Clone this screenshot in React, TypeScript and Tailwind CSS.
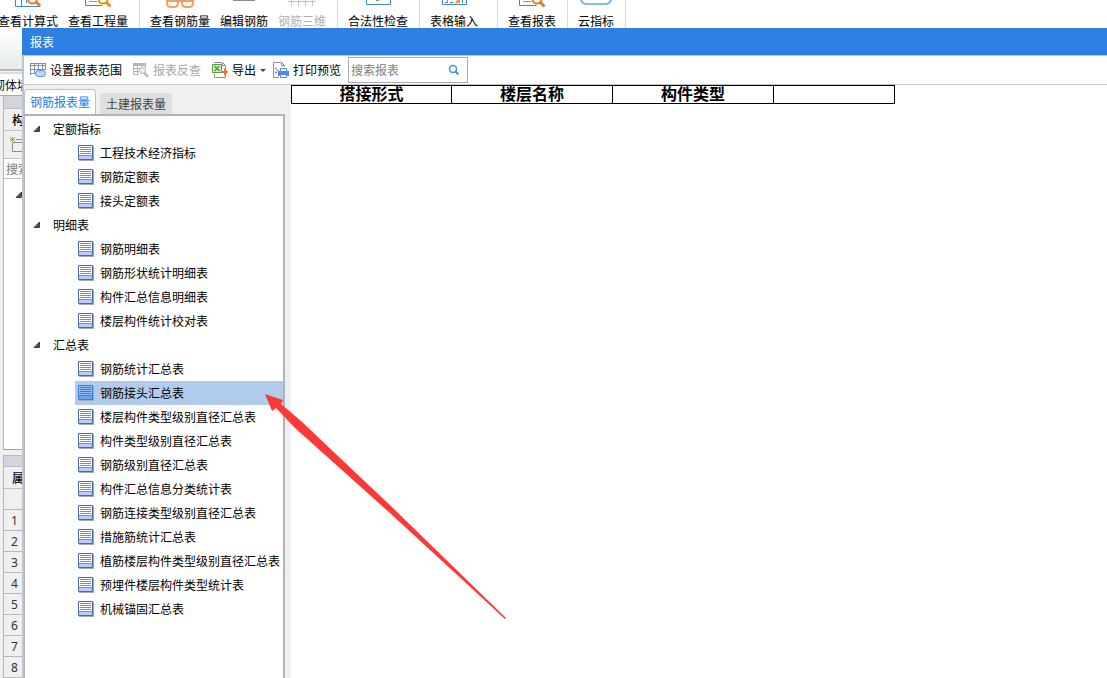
import React, { useState } from 'react';

interface ReportGroup {
  name: string;
  items: string[];
}

const reportGroups: ReportGroup[] = [
  { name: '定额指标', items: ['工程技术经济指标', '钢筋定额表', '接头定额表'] },
  {
    name: '明细表',
    items: ['钢筋明细表', '钢筋形状统计明细表', '构件汇总信息明细表', '楼层构件统计校对表'],
  },
  {
    name: '汇总表',
    items: [
      '钢筋统计汇总表',
      '钢筋接头汇总表',
      '楼层构件类型级别直径汇总表',
      '构件类型级别直径汇总表',
      '钢筋级别直径汇总表',
      '构件汇总信息分类统计表',
      '钢筋连接类型级别直径汇总表',
      '措施筋统计汇总表',
      '植筋楼层构件类型级别直径汇总表',
      '预埋件楼层构件类型统计表',
      '机械锚固汇总表',
    ],
  },
];

// Ribbon icons are scrolled up, only the lower 8px are visible
const CalcSearchIcon = () => (
  <svg className="h-2 w-7" viewBox="0 0 28 8" fill="none">
    <path d="M1.500 0v6.500h25M7.500 0v6M12.500 0v3" stroke="#3f86d2" />
    <circle cx="18.500" cy="-1" r="4.500" stroke="#ee7a25" strokeWidth="2" />
    <path d="M21.500 1.500l4.500 4" stroke="#ee7a25" strokeWidth="3" />
  </svg>
);

const SheetSearchIcon = ({ color }: { color: string }) => (
  <svg className="h-2 w-7" viewBox="0 0 28 8" fill="none">
    <path d="M1.500 0v5.500h17" stroke="#3f86d2" />
    <path d="M5 1.500h8" stroke="#8d969f" />
    <circle cx="19" cy="-1" r="4.500" stroke={color} strokeWidth="2" />
    <path d="M22 2l4.500 4.500" stroke={color} strokeWidth="3" />
  </svg>
);

const GlassesIcon = () => (
  <svg className="h-2 w-7" viewBox="0 0 28 8" fill="none" stroke="#f2a061" strokeWidth="2">
    <path d="M1 0v3q0 4 4 4h3q4 0 4-4V1M1 1h26M16 1v2q0 4 4 4h3q4 0 4-4V0" />
  </svg>
);

const EditIcon = () => (
  <svg className="h-2 w-7" viewBox="0 0 28 8">
    <path d="M3 0h22v1H3z" fill="#858e98" />
  </svg>
);

const RebarIcon = () => (
  <svg className="h-2 w-7" viewBox="0 0 28 8" fill="none" stroke="#c2c2c2">
    <path d="M0 1.500h28M3.500 0v6M10.500 0v6M17.500 0v6M24.500 0v6" />
  </svg>
);

const CheckIcon = () => (
  <svg className="h-2 w-7" viewBox="0 0 28 8" fill="none">
    <path d="M2.500 0v4.500h24V0" stroke="#3f86d2" />
    <path d="M12 0h3v1h-3z" fill="#6ab04a" />
  </svg>
);

const FormIcon = () => (
  <svg className="h-2 w-7" viewBox="0 0 28 8" fill="none">
    <path d="M2.500 0v4.500h24V0M7.500 0v1.500M5 2.500h3M10 2.500h3M22.500 0v3" stroke="#3f86d2" />
    <path d="M15 3l2-3h3v3z" fill="#ee9a35" />
  </svg>
);

const CloudIcon = () => (
  <svg className="h-2 w-8" viewBox="0 0 32 8" fill="none" stroke="#5fa4ee" strokeWidth="1.600">
    <path d="M1 0q1 4 6 4h18q5 0 6-4" />
  </svg>
);

const ReportIcon = ({ active = false }: { active?: boolean }) => (
  <svg className="h-4 w-4 shrink-0" viewBox="0 0 16 16">
    <path d="M1 1h15v15H1z" fill="#a4a8b4" />
    <path d="M.5.5h14v14H.5z" fill={active ? '#8dbdf3' : '#fff'} stroke={active ? '#3b7fd4' : '#4468b4'} />
    <path d="M1 11h13v3H1z" fill={active ? '#6aa6ec' : '#b9ccfa'} />
    <path
      d="M1 10.500h13M2 2.500h11M2 4.500h11M2 6.500h11M2 8.500h11"
      stroke={active ? '#3a80d8' : '#6a8edc'}
    />
  </svg>
);

const RangeIcon = () => (
  <svg className="h-4 w-4 shrink-0" viewBox="0 0 16 16" fill="none">
    <path d="M.5 1v12M4.500 1v11M8.500 1v8M12.500 1v7M15.500 1v7M0 3.500h16M0 7.500h15M0 11.500h5M0 1.500h16" stroke="#8290a0" />
    <rect x="5.500" y="8.500" width="10" height="6" rx="3" fill="#b9dafa" stroke="#4a90dc" />
  </svg>
);

const TraceIcon = () => (
  <svg className="h-4 w-4 shrink-0" viewBox="0 0 16 16" fill="none" stroke="#b5b5b5">
    <path d="M0 1h13v3H0z" fill="#b5b5b5" stroke="none" />
    <path d="M.5 1v11.500h6M4.500 2v10M8.500 2v3M12.500 2v4M0 6.500h7M0 9.500h6" />
    <circle cx="9.500" cy="8.500" r="3" fill="#eee" />
    <path d="M11.500 11l3.500 4" strokeWidth="2.400" />
  </svg>
);

const ExportIcon = () => (
  <svg className="h-4 w-4 shrink-0" viewBox="0 0 16 16" fill="none">
    <path d="M2.500 12v3.500h11V12M2 .5h8.500l3 3v4M10.500.5v3h3" stroke="#8b949c" />
    <path d="M.5 2.500h9v8h-9z" fill="#d8ecd0" stroke="#58a03c" />
    <path d="M2.500 4l5 5M7.500 4l-5 5" stroke="#58a03c" strokeWidth="1.600" />
    <path d="M9 9h3V6L16 10l-4 4v-3H9z" fill="#f27321" />
  </svg>
);

const PrintIcon = () => (
  <svg className="h-4 w-4 shrink-0" viewBox="0 0 16 16" fill="none">
    <path d="M6 15.500H.5V.5h8l3 3V5M8.500.5v3h3" stroke="#8b949c" />
    <path d="M2 6.500h2M3.500 8.500h2M2 10.500h2" stroke="#8b949c" strokeWidth="1.300" />
    <path d="M5 9h11v5H5z" fill="#4a90e0" />
    <path d="M7.500 6.500h6v3h-6z" fill="#fff" stroke="#4a90e0" />
    <path d="M7.500 12.500h6v3h-6z" fill="#fff" stroke="#4a90e0" />
  </svg>
);

const NewFileIcon = () => (
  <svg className="h-4 w-4 shrink-0" viewBox="0 0 16 16" fill="none">
    <path d="M2.500 6v8.500H16M6 2.500h10M2.500 5.500H16" stroke="#7f93a6" />
    <path d="M0 0l5 5M5 0L0 5M2.500 0v5M0 2.500h5" stroke="#f0a030" />
  </svg>
);

const Triangle = () => (
  <svg className="h-2 w-2 shrink-0" viewBox="0 0 8 8">
    <path d="M6.500 1v5.500H1z" fill="#505050" stroke="#222" strokeWidth=".8" />
  </svg>
);

const RibbonButton = ({ label, icon, disabled }: { label: string; icon: React.ReactNode; disabled?: boolean }) => (
  <button
    type="button"
    disabled={disabled}
    className="flex shrink-0 flex-col items-center gap-1.5 px-[5px] leading-[14px] whitespace-nowrap disabled:text-[#b0b0b0]"
  >
    {icon}
    <span>{label}</span>
  </button>
);

const Ribbon = () => {
  const groupClass = 'flex shrink-0 border-r border-[#d9d9d9] pl-[5px] pr-1.5';

  return (
    <header className="-ml-3 flex h-7 shrink-0 bg-white">
      <div className={groupClass}>
        <RibbonButton label="查看计算式" icon={<CalcSearchIcon />} />
        <RibbonButton label="查看工程量" icon={<SheetSearchIcon color="#ee8f1c" />} />
      </div>
      <div className={groupClass}>
        <RibbonButton label="查看钢筋量" icon={<GlassesIcon />} />
        <RibbonButton label="编辑钢筋" icon={<EditIcon />} />
        <RibbonButton label="钢筋三维" icon={<RebarIcon />} disabled />
      </div>
      <div className={groupClass}>
        <RibbonButton label="合法性检查" icon={<CheckIcon />} />
      </div>
      <div className={`${groupClass} w-[78px]`}>
        <RibbonButton label="表格输入" icon={<FormIcon />} />
      </div>
      <div className={groupClass}>
        <RibbonButton label="查看报表" icon={<SheetSearchIcon color="#ee7a25" />} />
      </div>
      <div className={groupClass}>
        <RibbonButton label="云指标" icon={<CloudIcon />} />
      </div>
    </header>
  );
};

// Part of the main window that stays visible left of the report dialog
const BackgroundStrip = () => (
  <aside className="w-[22px] shrink-0 overflow-hidden bg-[#f0f0f0] whitespace-nowrap">
    <div className="h-[41px] bg-linear-to-b from-white to-[#e6ebec]" />
    <div className="h-[5px] border-y-2 border-[#b4b8bc] border-b-[#dcdcdc] bg-[#f0f0f0]" />
    <div className="flex h-[22px] items-center border-b border-[#a8a8a8] bg-white">
      <span className="-ml-[7px]">砌体墙</span>
    </div>
    <div className="ml-[3px] border-l border-[#b4b4b4]">
      <div className="h-[13px] border-b border-[#b8bcc6] bg-[#d2d5dd]" />
      <div className="h-[22px] border-b border-[#c0c0c0] pl-2 leading-[22px] font-medium">构件</div>
      <div className="flex h-[28px] items-center border-b border-[#c0c0c0] pl-1.5">
        <NewFileIcon />
      </div>
      <div className="h-5 border-b border-[#c0c0c0] bg-white pl-0.5 leading-5 text-[#777]">搜索</div>
      <div className="flex h-[271px] border-b border-[#a0a0a0] bg-white pt-3 pl-[11px]">
        <Triangle />
      </div>
    </div>
    <div className="mt-[5px] ml-[3px] border-l border-[#b4b4b4]">
      <div className="h-3 border-y border-[#b8bcc6] bg-[#d2d5dd]" />
      <div className="h-[22px] border-b border-[#c0c0c0] pl-2 leading-[22px] font-medium">属性</div>
      <div className="h-[21px] border-b border-[#b8b8b8]" />
      {[1, 2, 3, 4, 5, 6, 7, 8].map((row) => (
        <div
          key={row}
          className="h-[21px] border-b border-[#b8b8b8] pl-[7px] font-['Noto_Sans',sans-serif] leading-[21px] text-[#333]"
        >
          {row}
        </div>
      ))}
    </div>
  </aside>
);

const Toolbar = () => {
  const buttonClass = 'flex h-6 shrink-0 items-center gap-1 rounded pl-1 whitespace-nowrap disabled:text-[#a6a6a6]';

  return (
    <div className="flex h-[30px] items-center gap-[3px] border-y border-[#c3c6cd] bg-white pl-0.5">
      <button type="button" className={`${buttonClass} pr-1`}>
        <RangeIcon />
        设置报表范围
      </button>
      <button type="button" disabled className={`${buttonClass} pr-1`}>
        <TraceIcon />
        报表反查
      </button>
      <button type="button" className={buttonClass}>
        <ExportIcon />
        导出
        <svg className="h-[3px] w-1.5" viewBox="0 0 6 3">
          <path d="M0 0h6L3 3z" fill="#444" />
        </svg>
      </button>
      <button type="button" className={`${buttonClass} pr-1`}>
        <PrintIcon />
        打印预览
      </button>
      <label className="flex h-[26px] w-[120px] items-center border border-[#aaaaaa] bg-white pr-[7px] pl-0.5">
        <input
          type="text"
          aria-label="搜索报表"
          placeholder="搜索报表"
          className="min-w-0 flex-1 outline-none placeholder:text-[#808080]"
        />
        <svg className="h-3 w-3" viewBox="0 0 12 12" fill="none" stroke="#3f94cf">
          <circle cx="5" cy="5" r="3.500" strokeWidth="1.500" />
          <path d="M7.500 7.500l3 3" strokeWidth="2" />
        </svg>
      </label>
    </div>
  );
};

const ReportTree = () => {
  const [selected, setSelected] = useState('钢筋接头汇总表');
  const [closed, setClosed] = useState<string[]>([]);

  const toggle = (name: string) => {
    setClosed((prev) => (prev.includes(name) ? prev.filter((n) => n !== name) : [...prev, name]));
  };

  return (
    <ul className="flex-1 border-t-2 border-r-2 border-l border-[#b4b4b8] bg-white pt-px">
      {reportGroups.map((group) => (
        <li key={group.name}>
          <button
            type="button"
            aria-expanded={!closed.includes(group.name)}
            onClick={() => toggle(group.name)}
            className="flex h-6 w-full items-center gap-3 pl-2"
          >
            <Triangle />
            {group.name}
          </button>
          {!closed.includes(group.name) && (
            <ul className="pl-[50px]">
              {group.items.map((item) => (
                <li key={item}>
                  <button
                    type="button"
                    onClick={() => setSelected(item)}
                    className={`flex h-6 w-full items-center gap-1.5 pl-[3px] whitespace-nowrap ${
                      selected === item ? 'bg-[#b0cbec]' : ''
                    }`}
                  >
                    <ReportIcon active={selected === item} />
                    {item}
                  </button>
                </li>
              ))}
            </ul>
          )}
        </li>
      ))}
    </ul>
  );
};

const Sidebar = () => {
  const [tab, setTab] = useState('钢筋报表量');

  return (
    <div className="flex w-[267px] shrink-0 flex-col bg-[#f0f0f0] pt-1 pr-1.5">
      <div role="tablist" className="flex h-[25px] items-end gap-1">
        {['钢筋报表量', '土建报表量'].map((name) => (
          <button
            key={name}
            type="button"
            role="tab"
            aria-selected={tab === name}
            onClick={() => setTab(name)}
            className={
              tab === name
                ? 'h-[25px] rounded-t border border-b-0 border-[#c0c0c0] bg-white px-[5px] text-[#1e80e4]'
                : 'h-[21px] rounded-t bg-[#dedede] px-1.5 text-[#444]'
            }
          >
            {name}
          </button>
        ))}
      </div>
      <ReportTree />
    </div>
  );
};

const App: React.FC = () => {
  return (
    <div className="relative flex h-screen flex-col overflow-hidden bg-white font-['Noto_Sans_CJK_SC','Noto_Sans',sans-serif] text-xs text-black">
      <Ribbon />
      <div className="flex min-h-0 flex-1">
        <BackgroundStrip />
        <section className="flex min-w-0 flex-1 flex-col">
          <h1 className="h-[27px] shrink-0 bg-[#2d7fe1] pl-2 leading-[27px] text-white">报表</h1>
          <div className="flex min-h-0 flex-1 flex-col border-l-2 border-[#bfc4d2]">
            <Toolbar />
            <div className="flex min-h-0 flex-1">
              <Sidebar />
              <main className="min-w-0 flex-1 bg-white">
                <table className="w-[604px] table-fixed border-collapse font-['Noto_Sans_CJK_SC',sans-serif] text-base leading-[14px]">
                  <colgroup>
                    <col className="w-[160px]" />
                    <col className="w-[161px]" />
                    <col className="w-[161px]" />
                    <col />
                  </colgroup>
                  <thead>
                    <tr>
                      {['搭接形式', '楼层名称', '构件类型', ''].map((title, index) => (
                        <th key={index} className="h-[18px] border border-black p-0 align-top font-bold">
                          {title}
                        </th>
                      ))}
                    </tr>
                  </thead>
                </table>
              </main>
            </div>
          </div>
        </section>
      </div>

      {/* Arrow pointing at the selected report */}
      <svg
        className="pointer-events-none absolute top-[394px] left-[265px] h-[226px] w-[241px]"
        viewBox="0 0 241 226"
      >
        <path d="M0 0L18 6L16 10L36 27L130 116L241 224L240 225L126 120L30 34L11 14L7 17Z" fill="#fb3a38" />
      </svg>
    </div>
  );
};

export default App;
